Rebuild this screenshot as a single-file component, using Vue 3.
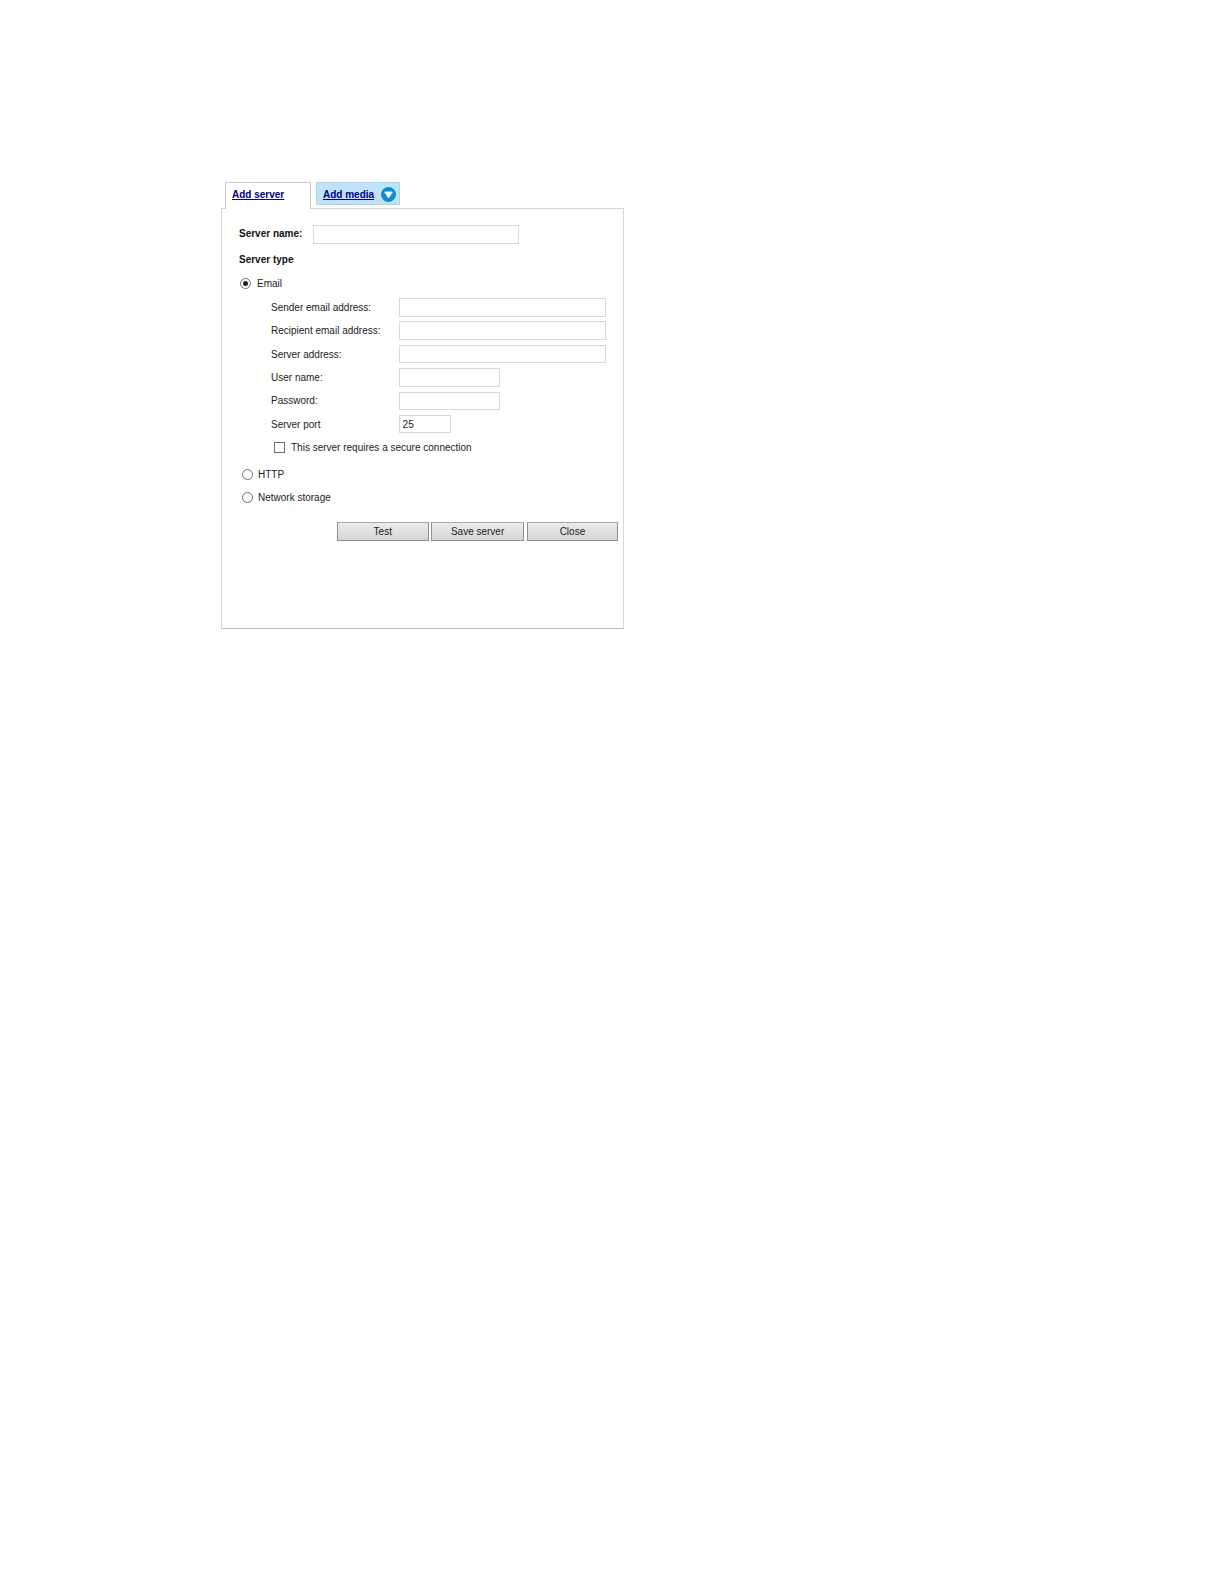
<script setup>
const emailFields = [
  { label: "Sender email address:", size: "long" },
  { label: "Recipient email address:", size: "long" },
  { label: "Server address:", size: "long" },
  { label: "User name:", size: "mid" },
  { label: "Password:", size: "mid" },
  { label: "Server port", size: "short", value: "25" },
];
</script>

<template>
  <div class="page">
    <div class="tabs">
      <a class="tab active">Add server</a>
      <a class="tab media">
        <span>Add media</span>
        <svg width="15" height="15" viewBox="0 0 16 16">
          <circle cx="8" cy="8" r="8" fill="#0f8fd0" />
          <path d="M4 5.4h8L8 11.6z" fill="#fff" stroke="#fff" stroke-linejoin="round" />
        </svg>
      </a>
    </div>
    <div class="panel">
      <div class="name-row">
        <b>Server name:</b>
        <input class="box name-input" type="text" />
      </div>
      <div class="type-title"><b>Server type</b></div>
      <div class="radio-row email">
        <span class="radio on"></span>
        <span>Email</span>
      </div>
      <div class="fields">
        <div v-for="f in emailFields" :key="f.label" class="field">
          <label>{{ f.label }}</label>
          <input class="box" :class="f.size" type="text" :value="f.value" />
        </div>
      </div>
      <div class="secure">
        <span class="check"></span>
        <span>This server requires a secure connection</span>
      </div>
      <div class="radio-row http">
        <span class="radio"></span>
        <span>HTTP</span>
      </div>
      <div class="radio-row storage">
        <span class="radio"></span>
        <span>Network storage</span>
      </div>
      <div class="buttons">
        <button class="test">Test</button>
        <button class="save">Save server</button>
        <button class="close">Close</button>
      </div>
    </div>
  </div>
</template>

<style scoped>
.page {
  width: 1224px;
  height: 1584px;
  padding: 182px 0 0 221px;
  box-sizing: border-box;
  background: #fff;
  font-family: "Liberation Sans", Arial, sans-serif;
  font-size: 10px;
  color: #222;
}

.tabs {
  display: flex;
  align-items: flex-start;
  margin-left: 4px;
  height: 26px;
  position: relative;
  z-index: 1;
}

.tab {
  color: #000080;
  font-weight: bold;
  text-decoration: underline;
  box-sizing: border-box;
  white-space: nowrap;
}

.active {
  width: 86px;
  height: 27px;
  padding: 6px 0 0 6px;
  background: #fff;
  border: 1px solid #c8c8c8;
  border-bottom: none;
}

.media {
  display: flex;
  align-items: center;
  width: 84px;
  height: 23px;
  margin-left: 5px;
  padding: 1px 0 0 6px;
  background: #bfe3f8;
  border: 1px solid #b4d2e6;
}

.media svg {
  margin-left: 7px;
}

.panel {
  width: 403px;
  height: 420.5px;
  box-sizing: border-box;
  padding: 16px 0 0 17px;
  border: 1px solid #d6d6d6;
  border-bottom-color: #bdbdbd;
}

.box {
  display: block;
  box-sizing: border-box;
  height: 18.5px;
  margin: 0;
  padding: 0 3px;
  background: #fff;
  border: 1px solid #d8d8d8;
  font-family: inherit;
  font-size: 10px;
  color: #222;
}

.name-row {
  display: flex;
  align-items: center;
  color: #111;
}

.name-row b {
  width: 74px;
  padding-bottom: 1px;
}

.name-input {
  width: 206px;
}

.type-title {
  margin-top: 10.5px;
  color: #111;
}

.radio-row {
  display: flex;
  align-items: center;
}

.radio {
  width: 9px;
  height: 9px;
  border: 1px solid #707070;
  border-radius: 50%;
  background: #fff;
  position: relative;
}

.radio.on::after {
  content: "";
  position: absolute;
  left: 2px;
  top: 2px;
  width: 5px;
  height: 5px;
  border-radius: 50%;
  background: #222;
}

.email {
  margin: 13px 0 0 1px;
  gap: 6px;
}

.fields {
  margin: 9px 0 0 32px;
}

.field {
  display: flex;
  align-items: center;
  height: 18.5px;
  margin-bottom: 4.9px;
}

.field label {
  width: 127.6px;
}

.long {
  width: 207px;
}

.mid {
  width: 101px;
}

.short {
  width: 52px;
}

.secure {
  display: flex;
  align-items: center;
  gap: 6px;
  margin: 9px 0 0 35px;
}

.check {
  width: 9px;
  height: 9px;
  border: 1px solid #707070;
  background: #fff;
}

.http {
  margin: 16px 0 0 3px;
  gap: 5px;
}

.storage {
  margin: 11.6px 0 0 3px;
  gap: 5px;
}

.buttons {
  display: flex;
  gap: 2.7px;
  margin: 18.5px 0 0 98px;
}

.buttons button {
  height: 19px;
  padding: 0;
  border: 1px solid #8f8f8f;
  border-top-color: #a8a8a8;
  background: linear-gradient(#ececec, #d4d4d4);
  font-family: inherit;
  font-size: 10px;
  color: #222;
}

.test {
  width: 91.5px;
}

.save {
  width: 92.8px;
}

.close {
  width: 91.5px;
}
</style>
